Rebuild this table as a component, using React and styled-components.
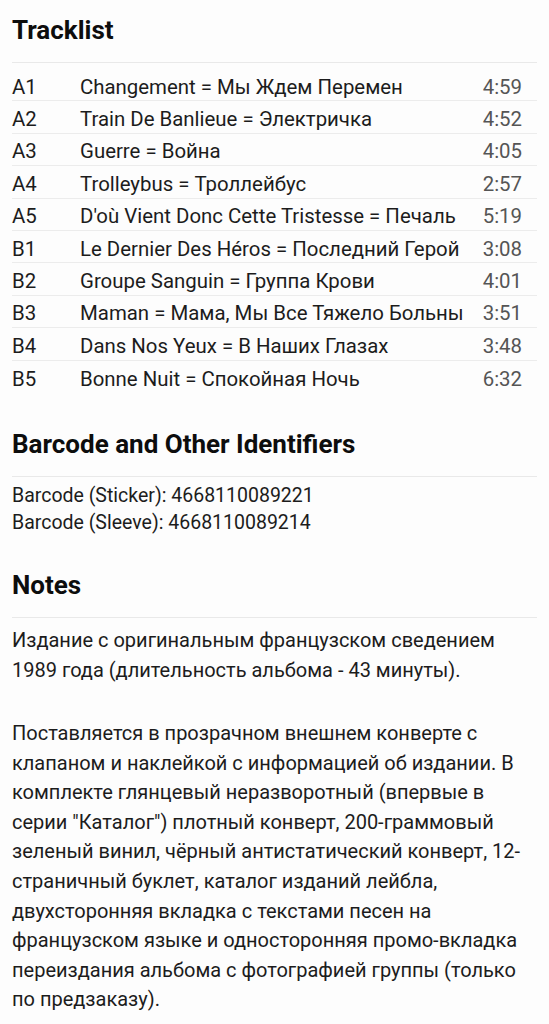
import React from 'react';
import styled, { createGlobalStyle } from 'styled-components';

const tracks = [
  { pos: 'A1', title: 'Changement = Мы Ждем Перемен', duration: '4:59' },
  { pos: 'A2', title: 'Train De Banlieue = Электричка', duration: '4:52' },
  { pos: 'A3', title: 'Guerre = Война', duration: '4:05' },
  { pos: 'A4', title: 'Trolleybus = Троллейбус', duration: '2:57' },
  { pos: 'A5', title: "D'où Vient Donc Cette Tristesse = Печаль", duration: '5:19' },
  { pos: 'B1', title: 'Le Dernier Des Héros = Последний Герой', duration: '3:08' },
  { pos: 'B2', title: 'Groupe Sanguin = Группа Крови', duration: '4:01' },
  { pos: 'B3', title: 'Maman = Мама, Мы Все Тяжело Больны', duration: '3:51' },
  { pos: 'B4', title: 'Dans Nos Yeux = В Наших Глазах', duration: '3:48' },
  { pos: 'B5', title: 'Bonne Nuit = Спокойная Ночь', duration: '6:32' },
];

const barcodes = [
  'Barcode (Sticker): 4668110089221',
  'Barcode (Sleeve): 4668110089214',
];

const notes = [
  'Издание с оригинальным французском сведением 1989 года (длительность альбома - 43 минуты).',
  'Поставляется в прозрачном внешнем конверте с клапаном и наклейкой с информацией об издании. В комплекте глянцевый неразворотный (впервые в серии "Каталог") плотный конверт, 200-граммовый зеленый винил, чёрный антистатический конверт, 12-страничный буклет, каталог изданий лейбла, двухсторонняя вкладка с текстами песен на французском языке и односторонняя промо-вкладка переиздания альбома с фотографией группы (только по предзаказу).',
];

function App() {
  return (
    <>
      <GlobalStyle />
      <Page>
        <Section>
          <Heading>Tracklist</Heading>
          <TrackTable>
            {tracks.map((t, i) => (
              <TrackRow key={t.pos} $last={i === tracks.length - 1}>
                <Position>{t.pos}</Position>
                <Title>{t.title}</Title>
                <Duration>{t.duration}</Duration>
              </TrackRow>
            ))}
          </TrackTable>
        </Section>

        <Section>
          <Heading>Barcode and Other Identifiers</Heading>
          <IdList>
            {barcodes.map((b) => (
              <IdLine key={b}>{b}</IdLine>
            ))}
          </IdList>
        </Section>

        <Section>
          <Heading>Notes</Heading>
          <NotesBody>
            {notes.map((n, i) => (
              <Paragraph key={i}>{n}</Paragraph>
            ))}
          </NotesBody>
        </Section>
      </Page>
    </>
  );
}

const GlobalStyle = createGlobalStyle`
  html, body {
    margin: 0;
    padding: 0;
    background: #fdfdfd;
  }
  body {
    font-family: Roboto, "Liberation Sans", sans-serif;
    color: #1c1c1c;
  }
`;

const Page = styled.div`
  display: flex;
  flex-direction: column;
  gap: 34px;
  padding: 15px 12px 0 12px;
  width: 525px;
`;

const Section = styled.section`
  display: flex;
  flex-direction: column;
`;

const Heading = styled.h2`
  margin: 0;
  padding-bottom: 17px;
  font-size: 26px;
  line-height: 30px;
  font-weight: 700;
  color: #0d0d0d;
  border-bottom: 1px solid #e9e9e9;
`;

const TrackTable = styled.div`
  display: flex;
  flex-direction: column;
  padding: 6px 0 2px 0;
`;

const TrackRow = styled.div`
  display: grid;
  grid-template-columns: 68px 1fr auto;
  align-items: center;
  height: 32.4px;
  box-sizing: border-box;
  padding: 4px 15px 0 0;
  font-size: 20.4px;
  line-height: 24px;
  border-bottom: ${(p) => (p.$last ? 'none' : '1px solid #ececec')};
`;

const Position = styled.span`
  color: #1c1c1c;
`;

const Title = styled.span`
  color: #1c1c1c;
  white-space: nowrap;
`;

const Duration = styled.span`
  color: #555;
  text-align: right;
`;

const IdList = styled.div`
  display: flex;
  flex-direction: column;
  padding-top: 5px;
`;

const IdLine = styled.div`
  font-size: 19.5px;
  line-height: 27px;
`;

const NotesBody = styled.div`
  display: flex;
  flex-direction: column;
  gap: 34px;
  padding-top: 8px;
`;

const Paragraph = styled.p`
  margin: 0;
  font-size: 20px;
  line-height: 29.6px;
`;

export default App;
